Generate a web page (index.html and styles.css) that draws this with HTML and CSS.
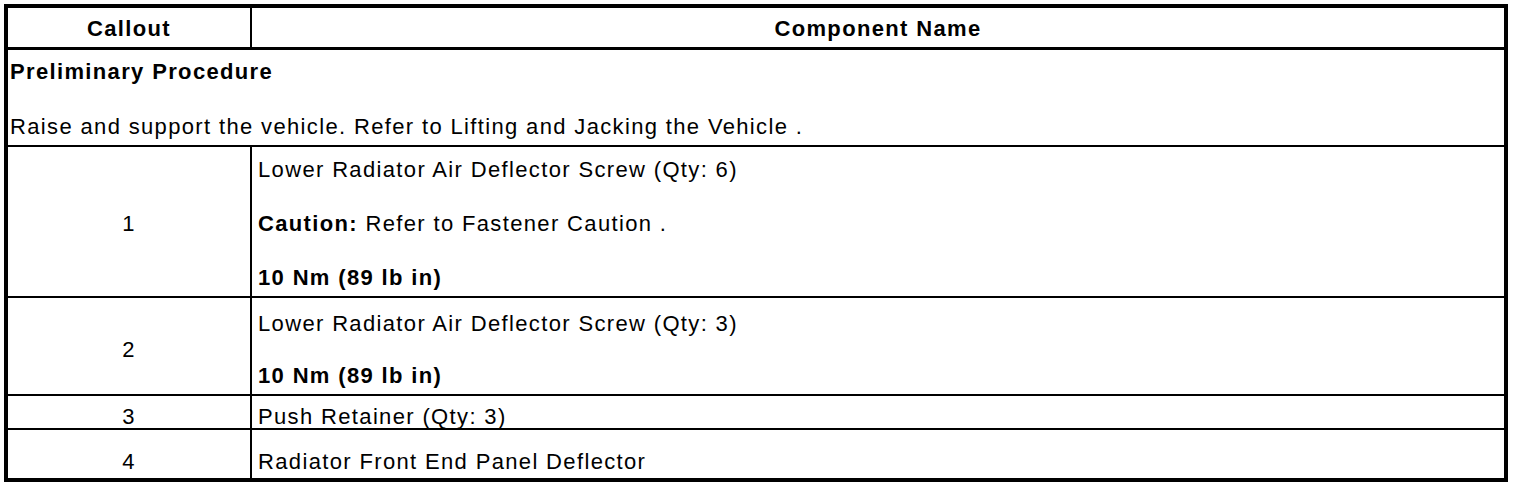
FILE: index.html
```html
<!DOCTYPE html>
<html>
<head>
<meta charset="utf-8">
<link rel="stylesheet" href="styles.css">
</head>
<body>
<table class="parts">
  <thead>
    <tr class="row-head">
      <th class="col-callout">Callout</th>
      <th class="col-name">Component Name</th>
    </tr>
  </thead>
  <tbody>
    <tr class="row-pre">
      <td class="span" colspan="2">
        <p class="b">Preliminary Procedure</p>
        <p>Raise and support the vehicle. Refer to Lifting and Jacking the Vehicle .</p>
      </td>
    </tr>
    <tr class="row-1">
      <td class="col-callout">1</td>
      <td class="col-name">
        <p>Lower Radiator Air Deflector Screw (Qty: 6)</p>
        <p><span class="b">Caution:</span> Refer to Fastener Caution .</p>
        <p class="b">10 Nm (89 lb in)</p>
      </td>
    </tr>
    <tr class="row-2">
      <td class="col-callout">2</td>
      <td class="col-name">
        <p>Lower Radiator Air Deflector Screw (Qty: 3)</p>
        <p class="b">10 Nm (89 lb in)</p>
      </td>
    </tr>
    <tr class="row-3">
      <td class="col-callout">3</td>
      <td class="col-name"><p>Push Retainer (Qty: 3)</p></td>
    </tr>
    <tr class="row-4 last">
      <td class="col-callout">4</td>
      <td class="col-name"><p>Radiator Front End Panel Deflector</p></td>
    </tr>
  </tbody>
</table>
</body>
</html>
```
FILE: styles.css
```css
html, body {
  margin: 0;
  padding: 0;
  background: #fff;
}
body {
  padding: 4px;
  font-family: "Liberation Sans", Arial, sans-serif;
  font-size: 22px;
  letter-spacing: 1.35px;
  color: #000;
}
.parts {
  border-collapse: separate;
  border-spacing: 0;
  border: 4px solid #000;
  width: 1504px;
  table-layout: fixed;
}
.parts th, .parts td {
  box-sizing: border-box;
  padding: 0;
  vertical-align: middle;
  border-bottom: 2px solid #000;
  line-height: 24px;
}
.parts th {
  font-weight: bold;
  text-align: center;
  border-bottom-width: 3px;
}
.col-callout {
  width: 244px;
  text-align: center;
  border-right: 2px solid #000;
}
.parts td.col-name {
  text-align: left;
  padding-left: 6px;
}
.parts td.span {
  padding-left: 2px;
}
.parts p {
  margin: 0;
}
.parts p + p {
  margin-top: 30px;
}
.row-pre p + p {
  margin-top: 31px;
}
.row-2 p + p {
  margin-top: 28px;
}
.b {
  font-weight: bold;
}
.row-head th { height: 42px; padding-top: 2px; }
.row-pre td { height: 97px; padding-top: 4px; }
.row-1 td { height: 151px; padding-top: 4px; }
.row-2 td { height: 98px; padding-top: 8px; }
.row-3 td { height: 34px; padding-top: 10px; line-height: 22px; vertical-align: top; }
.row-4 td { height: 48px; padding-top: 16px; }
.last td { border-bottom: 0; }
```
